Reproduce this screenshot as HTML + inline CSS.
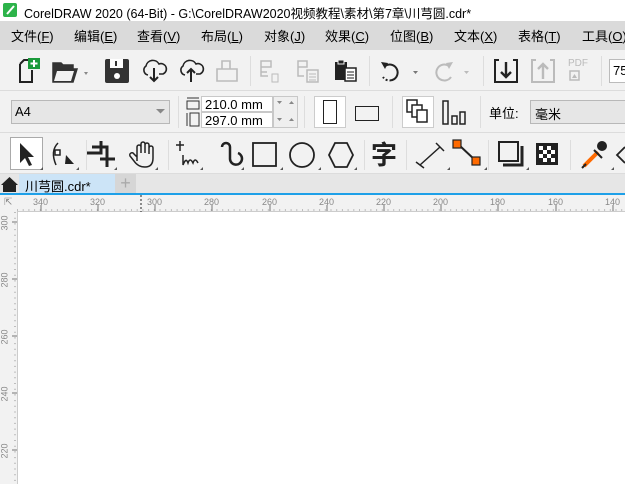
<!DOCTYPE html><html><head><meta charset="utf-8"><style>
*{margin:0;padding:0;box-sizing:border-box}
body{width:625px;height:484px;overflow:hidden;background:#fff;font-family:"Liberation Sans","Noto Sans CJK SC",sans-serif;position:relative}
.a{position:absolute}
.t{font-size:13px;color:#000}
.menu span{position:absolute;top:5px;font-size:13px;white-space:nowrap}
svg{position:absolute;overflow:visible}
.rl{font-size:9px;color:#888;position:absolute}
</style></head><body>
<div class="a" style="left:0;top:0;width:625px;height:21px;background:#fff"></div>
<div class="a" style="left:3px;top:3px;width:14px;height:14px;background:#2db34a;border-radius:2px"></div>
<svg style="left:3px;top:3px" width="14" height="14"><path d="M4 11 L11 3" stroke="#fff" stroke-width="2"/></svg>
<div class="a t" style="left:24px;top:3px;font-size:12.5px;white-space:nowrap">CorelDRAW 2020 (64-Bit) - G:\CorelDRAW2020视频教程\素材\第7章\川芎圆.cdr*</div>
<div class="a menu" style="left:0;top:21px;width:625px;height:29px;background:#dadada;overflow:hidden">
<span style="left:11px">文件(<u>F</u>)</span><span style="left:74px">编辑(<u>E</u>)</span><span style="left:137px">查看(<u>V</u>)</span><span style="left:201px">布局(<u>L</u>)</span><span style="left:264px">对象(<u>J</u>)</span><span style="left:325px">效果(<u>C</u>)</span><span style="left:390px">位图(<u>B</u>)</span><span style="left:454px">文本(<u>X</u>)</span><span style="left:518px">表格(<u>T</u>)</span><span style="left:582px">工具(<u>O</u>)</span></div>
<div class="a" style="left:0;top:50px;width:625px;height:125px;background:#f2f2f2"></div>
<div class="a" style="left:0;top:90px;width:625px;height:1px;background:#dcdcdc"></div>
<div class="a" style="left:0;top:132px;width:625px;height:1px;background:#dcdcdc"></div>
<div class="a" style="left:0;top:173px;width:625px;height:1px;background:#dcdcdc"></div>
<svg style="left:14px;top:58px" width="30" height="28"><path d="M6 6 L10 2 L18 2 M6 6 V24 H18 V12" fill="none" stroke="#222" stroke-width="2"/><rect x="14" y="0" width="12" height="11" fill="#1a9a3a"/><path d="M20 2v7M16.5 5.5h7" stroke="#fff" stroke-width="2"/></svg>
<svg style="left:52px;top:60px" width="44" height="24"><path d="M1 3 H9 L11 5 H21 V9 H7 L3 22 H1Z M7 9 H25 L21 22 H3" fill="#333" stroke="#333" stroke-width="1.5"/><path d="M5 11h17l-3 10H2z" fill="#f2f2f2"/><path d="M32 12 l4 0 l-2 3z" fill="#888"/></svg>
<svg style="left:105px;top:59px" width="24" height="24"><rect x="0" y="0" width="24" height="24" rx="2" fill="#333"/><rect x="5" y="0" width="13" height="9" fill="#fff"/><rect x="10" y="2" width="2" height="5" fill="#333"/><circle cx="12" cy="17" r="3" fill="#fff"/></svg>
<svg style="left:142px;top:59px" width="26" height="24"><path d="M6 16 A5 5 0 0 1 4 7 A7 7 0 0 1 17 5 A5 5 0 0 1 21 15 H17" fill="none" stroke="#222" stroke-width="1.6"/><path d="M12 9 V22 M8 18 L12 22 L16 18" fill="none" stroke="#222" stroke-width="2"/></svg>
<svg style="left:179px;top:59px" width="26" height="24"><path d="M6 16 A5 5 0 0 1 4 7 A7 7 0 0 1 17 5 A5 5 0 0 1 21 15 H17" fill="none" stroke="#222" stroke-width="1.6"/><path d="M12 23 V10 M8 14 L12 10 L16 14" fill="none" stroke="#222" stroke-width="2"/></svg>
<svg style="left:216px;top:59px" width="24" height="24"><path d="M6 10 V2 H14 V10 M1 10 H21 V22 H1Z" fill="none" stroke="#bbb" stroke-width="1.6"/></svg>
<div class="a" style="left:250px;top:56px;width:1px;height:30px;background:#ddd"></div>
<svg style="left:260px;top:60px" width="20" height="24"><path d="M1 1h10v6H1zM1 7v9h7M1 12h6" fill="none" stroke="#bbb" stroke-width="1.5"/><path d="M12 14h6v8h-6z" fill="none" stroke="#bbb"/></svg>
<svg style="left:297px;top:60px" width="24" height="24"><path d="M1 1h9v6H1zM1 7v9h6" fill="none" stroke="#bbb" stroke-width="1.5"/><rect x="10" y="10" width="11" height="12" fill="none" stroke="#bbb" stroke-width="1.5"/><path d="M12 14h7M12 17h7M12 20h7" stroke="#bbb"/></svg>
<svg style="left:334px;top:59px" width="24" height="24"><rect x="1" y="3" width="12" height="18" fill="#222"/><rect x="4" y="1" width="6" height="4" fill="#222" stroke="#f2f2f2"/><rect x="11" y="9" width="11" height="13" fill="#fff" stroke="#222" stroke-width="1.5"/><path d="M13 13h7M13 16h7M13 19h7" stroke="#222"/></svg>
<div class="a" style="left:369px;top:56px;width:1px;height:30px;background:#ddd"></div>
<svg style="left:379px;top:60px" width="40" height="24"><path d="M6 6 A8 8 0 1 1 4 17" fill="none" stroke="#222" stroke-width="2" stroke-dasharray="30 2 2 2 2 2"/><path d="M2 2 L9 3 L6 9Z" fill="#222"/><path d="M34 11 l5 0 l-2.5 3z" fill="#777"/></svg>
<svg style="left:431px;top:60px" width="40" height="24"><path d="M18 6 A8 8 0 1 0 20 17" fill="none" stroke="#bbb" stroke-width="2"/><path d="M22 2 L15 3 L18 9Z" fill="#bbb"/><path d="M33 11 l5 0 l-2.5 3z" fill="#bbb"/></svg>
<div class="a" style="left:483px;top:56px;width:1px;height:30px;background:#ddd"></div>
<svg style="left:494px;top:59px" width="24" height="24"><path d="M5 1 H1 V23 H23 V1 H19" fill="none" stroke="#222" stroke-width="2"/><path d="M12 3 V18 M7 13 L12 18 L17 13" fill="none" stroke="#222" stroke-width="2.4"/></svg>
<svg style="left:531px;top:59px" width="24" height="24"><path d="M5 1 H1 V23 H23 V1 H19" fill="none" stroke="#bbb" stroke-width="2"/><path d="M12 20 V5 M7 10 L12 5 L17 10" fill="none" stroke="#bbb" stroke-width="2.4"/></svg>
<div class="a" style="left:568px;top:58px;font-size:10px;color:#bbb">PDF</div>
<svg style="left:570px;top:71px" width="10" height="10"><rect x="0" y="0" width="9" height="9" fill="none" stroke="#bbb" stroke-width="1.5"/><path d="M2 7 L4.5 3 L7 7z" fill="#bbb"/></svg>
<div class="a" style="left:601px;top:56px;width:1px;height:30px;background:#ddd"></div>
<div class="a" style="left:609px;top:59px;width:20px;height:24px;background:#fff;border:1px solid #bbb;font-size:13px;padding:3px 0 0 3px">75</div>
<div class="a" style="left:11px;top:100px;width:159px;height:24px;background:#e6e6e6;border:1px solid #b8b8b8;font-size:13px;padding:3px 0 0 3px">A4</div>
<svg style="left:156px;top:109px" width="10" height="6"><path d="M0 0h9l-4.5 4.5z" fill="#888"/></svg>
<div class="a" style="left:178px;top:96px;width:1px;height:32px;background:#ddd"></div>
<svg style="left:186px;top:97px" width="16" height="32"><path d="M1 1h12M1 4h12v8H1z" fill="none" stroke="#333"/><path d="M1 16v13M4 16h9v13H4z" fill="none" stroke="#333"/></svg>
<div class="a" style="left:201px;top:96px;width:72px;height:16px;background:#fff;border:1px solid #c8c8c8;font-size:13px;padding:0 0 0 3px;line-height:15px">210.0 mm</div>
<div class="a" style="left:201px;top:112px;width:72px;height:16px;background:#fff;border:1px solid #c8c8c8;font-size:13px;padding:0 0 0 3px;line-height:15px">297.0 mm</div>
<div class="a" style="left:273px;top:96px;width:25px;height:32px;background:#efefef;border:1px solid #c8c8c8"></div>
<svg style="left:277px;top:100px" width="20" height="26"><path d="M0 1h5l-2.5 3zM0 18h5l-2.5 3z" fill="#888"/><path d="M12 4h5l-2.5-3zM12 21h5l-2.5-3z" fill="#888"/></svg>
<div class="a" style="left:304px;top:96px;width:1px;height:32px;background:#ddd"></div>
<div class="a" style="left:314px;top:96px;width:32px;height:32px;background:#fff;border:1px solid #ccc"></div>
<div class="a" style="left:323px;top:100px;width:14px;height:24px;border:1.5px solid #222"></div>
<div class="a" style="left:355px;top:106px;width:24px;height:15px;border:1.5px solid #222"></div>
<div class="a" style="left:392px;top:96px;width:1px;height:32px;background:#ddd"></div>
<div class="a" style="left:402px;top:96px;width:32px;height:32px;background:#fff;border:1px solid #ccc"></div>
<svg style="left:406px;top:99px" width="24" height="26"><rect x="1" y="1" width="10" height="12" fill="#fff" stroke="#222" stroke-width="1.5"/><rect x="6" y="6" width="10" height="12" fill="#fff" stroke="#222" stroke-width="1.5"/><rect x="11" y="11" width="10" height="12" fill="#fff" stroke="#222" stroke-width="1.5"/></svg>
<svg style="left:442px;top:100px" width="26" height="26"><rect x="1" y="1" width="5" height="23" fill="none" stroke="#222" stroke-width="1.5"/><rect x="10" y="16" width="5" height="8" fill="none" stroke="#222" stroke-width="1.5"/><rect x="18" y="12" width="5" height="12" fill="none" stroke="#222" stroke-width="1.5"/></svg>
<div class="a" style="left:480px;top:96px;width:1px;height:32px;background:#ddd"></div>
<div class="a t" style="left:489px;top:103px">单位:</div>
<div class="a" style="left:530px;top:100px;width:100px;height:24px;background:#e6e6e6;border:1px solid #b8b8b8;font-size:13px;padding:3px 0 0 4px">毫米</div>
<div class="a" style="left:10px;top:137px;width:33px;height:33px;background:#fff;border:1px solid #aaa"></div>
<svg style="left:0;top:137px" width="625" height="36" fill="none" stroke="#222" stroke-width="2">
<path d="M20 6 L20 26 L25 21 L29 29 L32 28 L28 20 L34 20Z" fill="#222" stroke="none"/>
<path d="M58 6 Q50 14 56 28" stroke-width="1.5"/><rect x="55" y="13" width="5" height="5" fill="#fff" stroke-width="1.5"/><path d="M66 18 L74 27 L65 27Z" fill="#222" stroke="none"/>
<path d="M92 10 H107 V22 M101 4 V16 H86" stroke-width="3"/><path d="M100 22 H115 M107 22 V30" stroke-width="3"/>
<path d="M137 24 V10 a2 2 0 0 1 4 0 V16 M141 16 V7 a2 2 0 0 1 4 0 V16 M145 16 V8 a2 2 0 0 1 4 0 V17 M149 17 V11 a2 2 0 0 1 4 0 V21 Q153 30 145 30 Q138 30 134 24 L130 19 a2 2 0 0 1 4 -2 L137 20" stroke-width="1.5"/>
<path d="M180 4 V14 M176 8 H184 M183 18 V28 Q186 20 188 26 Q190 20 193 26 Q195 20 198 26" stroke-width="1.5"/>
<path d="M222 10 a4 4 0 0 1 8 0 V22 a6 6 0 1 0 8 -6" stroke-width="2.5"/>
<rect x="253" y="6" width="23" height="23" stroke-width="1.8"/>
<circle cx="302" cy="18" r="12" stroke-width="1.8"/>
<path d="M335 6 H347 L353 18 L347 30 H335 L329 18Z" stroke-width="1.8"/>
<path d="M420 28 L440 10 M416 25 L424 31 M436 6 L444 14" stroke-width="1.5"/>
<path d="M459 8 L475 23" stroke-width="2"/><rect x="453" y="3" width="8" height="8" fill="#ff6a00" stroke-width="1.2"/><rect x="472" y="20" width="8" height="8" fill="#ff6a00" stroke-width="1.2"/>
<rect x="499" y="5" width="19" height="19" stroke-width="2"/><path d="M522 9 V28 H503" stroke-width="3"/>
<rect x="536" y="6" width="22" height="22" fill="#222" stroke="none"/>
<path d="M539 9h4v4h-4zM547 9h4v4h-4zM543 13h4v4h-4zM551 13h4v4h-4zM539 17h4v4h-4zM547 17h4v4h-4zM543 21h4v4h-4zM551 21h4v4h-4z" fill="#fff" stroke="none"/>
<path d="M584 29 L598 15" stroke="#ff6a00" stroke-width="4"/><path d="M582 31 L586 27" stroke-width="2"/><path d="M594 13 L602 21" stroke-width="2"/><circle cx="602" cy="9" r="4" fill="#222"/>
<path d="M625 10 L617 18 L625 26" stroke-width="1.8"/>
</svg>
<div class="a" style="left:371px;top:140px;font-size:26px;font-weight:bold;color:#222;line-height:30px">字</div>
<svg style="left:0;top:137px" width="625" height="36" fill="#555">
<path d="M40 33l3-3v3zM76 33l3-3v3zM114 33l3-3v3zM155 33l3-3v3zM200 33l3-3v3zM241 33l3-3v3zM280 33l3-3v3zM318 33l3-3v3zM354 33l3-3v3zM447 33l3-3v3zM484 33l3-3v3zM526 33l3-3v3zM611 33l3-3v3z"/>
</svg>
<div class="a" style="left:86px;top:140px;width:1px;height:30px;background:#ddd"></div>
<div class="a" style="left:168px;top:140px;width:1px;height:30px;background:#ddd"></div>
<div class="a" style="left:364px;top:140px;width:1px;height:30px;background:#ddd"></div>
<div class="a" style="left:406px;top:140px;width:1px;height:30px;background:#ddd"></div>
<div class="a" style="left:488px;top:140px;width:1px;height:30px;background:#ddd"></div>
<div class="a" style="left:570px;top:140px;width:1px;height:30px;background:#ddd"></div>
<div class="a" style="left:0;top:174px;width:625px;height:20px;background:#e6e6e6"></div>
<svg style="left:1px;top:176px" width="18" height="16"><path d="M8.5 1 L17 9 H15 V16 H2 V9 H0Z" fill="#222"/></svg>
<div class="a" style="left:19px;top:174px;width:96px;height:20px;background:#cce4f7;font-size:13px;padding:2px 0 0 6px">川芎圆.cdr*</div>
<div class="a" style="left:115px;top:174px;width:21px;height:20px;background:#d6d6d6;color:#aaa;font-size:18px;text-align:center;line-height:18px">+</div>
<div class="a" style="left:0;top:193px;width:625px;height:2px;background:#1ea0e8"></div>
<div class="a" style="left:0;top:195px;width:625px;height:17px;background:#f2f2f2"></div>
<div class="a" style="left:0;top:195px;width:17px;height:289px;background:#f2f2f2"></div>
<div class="a" style="left:17px;top:212px;width:608px;height:272px;background:#fff"></div>
<div class="a" style="left:17px;top:211px;width:608px;height:1px;background:#ccc"></div>
<div class="a" style="left:17px;top:212px;width:1px;height:272px;background:#ccc"></div>
<div class="rl" style="left:4px;top:197px;font-size:10px">⇱</div>
<svg style="left:0;top:195px" width="625" height="289" stroke="#777" stroke-width="1">
<path d="M41 10v6M98 10v6M155 10v6M212 10v6M270 10v6M327 10v6M384 10v6M441 10v6M498 10v6M556 10v6M613 10v6"/>
<path d="M141 0v17" stroke="#222" stroke-dasharray="2 2"/>
<path d="M12 27h5M12 84h5M12 141h5M12 198h5M12 255h5"/>
</svg>
<svg style="left:17px;top:208px" width="608" height="4"><line x1="0" y1="2" x2="608" y2="2" stroke="#888" stroke-dasharray="1 4.7" stroke-width="1"/></svg>
<svg style="left:13px;top:212px" width="4" height="272"><line x1="2" y1="0" x2="2" y2="272" stroke="#888" stroke-dasharray="1 4.7"/></svg>
<div class="rl" style="left:33px;top:197px">340</div><div class="rl" style="left:90px;top:197px">320</div><div class="rl" style="left:147px;top:197px">300</div><div class="rl" style="left:204px;top:197px">280</div><div class="rl" style="left:262px;top:197px">260</div><div class="rl" style="left:319px;top:197px">240</div><div class="rl" style="left:376px;top:197px">220</div><div class="rl" style="left:433px;top:197px">200</div><div class="rl" style="left:490px;top:197px">180</div><div class="rl" style="left:548px;top:197px">160</div><div class="rl" style="left:605px;top:197px">140</div>
<div class="rl" style="left:-3px;top:218px;transform:rotate(-90deg)">300</div>
<div class="rl" style="left:-3px;top:275px;transform:rotate(-90deg)">280</div>
<div class="rl" style="left:-3px;top:332px;transform:rotate(-90deg)">260</div>
<div class="rl" style="left:-3px;top:389px;transform:rotate(-90deg)">240</div>
<div class="rl" style="left:-3px;top:446px;transform:rotate(-90deg)">220</div>
</body></html>
